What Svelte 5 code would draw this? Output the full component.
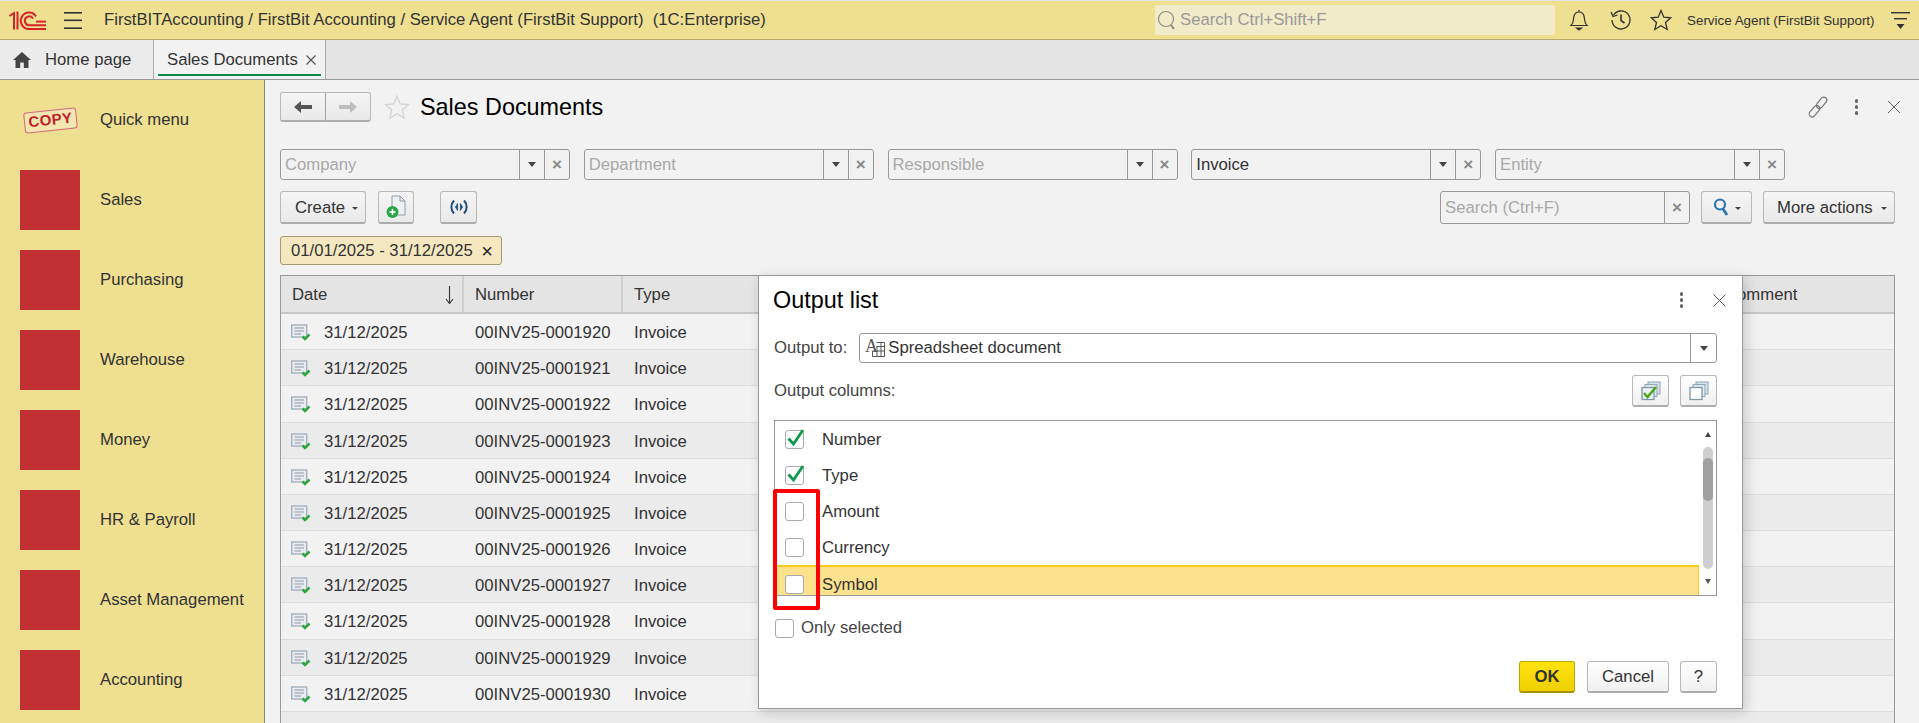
<script>
	const menu = ['Sales', 'Purchasing', 'Warehouse', 'Money', 'HR & Payroll', 'Asset Management', 'Accounting'];
	const filters = [
		{ label: 'Company', value: false },
		{ label: 'Department', value: false },
		{ label: 'Responsible', value: false },
		{ label: 'Invoice', value: true },
		{ label: 'Entity', value: false }
	];
	const rows = Array.from({ length: 11 }, (_, i) => `00INV25-00019${20 + i}`);
	const columns = [
		{ name: 'Number', checked: true },
		{ name: 'Type', checked: true },
		{ name: 'Amount', checked: false },
		{ name: 'Currency', checked: false },
		{ name: 'Symbol', checked: false, current: true }
	];
</script>

<div class="app">
	<header class="topbar">
		<svg class="logo" viewBox="0 0 37 19" width="37" height="19" fill="none" stroke="#d8242a" stroke-width="2">
			<path d="M0.5 5 L5 2 V18.5 M8.5 0.5 V18.5" />
			<path d="M37 18 H20 A8.2 8.2 0 1 1 27 5.5" />
			<path d="M37 14.2 H20.5 A4.4 4.4 0 1 1 24 7.5" />
			<path d="M27 10.6 H37" />
		</svg>
		<svg class="burger" viewBox="0 0 18 17" width="18" height="17" fill="#333">
			<rect y="0" width="18" height="1.6" />
			<rect y="7.5" width="18" height="1.6" />
			<rect y="15.4" width="18" height="1.6" />
		</svg>
		<span class="app-title">FirstBITAccounting / FirstBit Accounting / Service Agent (FirstBit Support)&nbsp; (1C:Enterprise)</span>
		<div class="global-search">
			<svg viewBox="0 0 20 20" width="20" height="20" fill="none" stroke="#8f8f80" stroke-width="1.2">
				<circle cx="9" cy="9" r="7.5" />
				<path d="M14 15 L17 19" stroke-width="2" />
			</svg>
			<span>Search Ctrl+Shift+F</span>
		</div>
		<svg class="bell" viewBox="0 0 20 22" width="20" height="22" fill="none" stroke="#333" stroke-width="1.2">
			<path d="M2 16.5 C5 14 4 11 5 7 C6 3.5 8 3 10 3 C12 3 14 3.5 15 7 C16 11 15 14 18 16.5 Z" />
			<path d="M10 1 V3" />
			<path d="M7.5 19 H12.5 L10 21 Z" fill="#333" />
		</svg>
		<svg class="history" viewBox="0 0 22 22" width="22" height="22" fill="none" stroke="#333" stroke-width="1.3">
			<path d="M3.5 6 A9 9 0 1 1 2 11" />
			<path d="M1 3 L3 7.5 L7.5 6" />
			<path d="M11 5.5 V11.5 L14.5 14" stroke-width="1.6" />
		</svg>
		<svg class="fav" viewBox="0 0 22 22" width="22" height="22" fill="none" stroke="#333" stroke-width="1.3">
			<path d="M11 1.5 L13.8 8.2 L20.8 8.8 L15.5 13.4 L17.2 20.5 L11 16.7 L4.8 20.5 L6.5 13.4 L1.2 8.8 L8.2 8.2 Z" />
		</svg>
		<span class="user">Service Agent (FirstBit Support)</span>
		<svg class="user-menu" viewBox="0 0 19 17" width="19" height="17" fill="#333">
			<rect width="19" height="1.4" />
			<rect x="3" y="6" width="13" height="1.4" />
			<path d="M5.5 12 H13.5 L9.5 17 Z" />
		</svg>
	</header>

	<nav class="tabs">
		<div class="tab home">
			<svg viewBox="0 0 18 16" width="18" height="16" fill="#444">
				<path d="M9 0 L18 8 H15.5 V16 H10.8 V10.5 H7.2 V16 H2.5 V8 H0 Z" />
			</svg>
			<span>Home page</span>
		</div>
		<div class="tab active">
			<span>Sales Documents</span>
			<svg viewBox="0 0 10 10" width="10" height="10" stroke="#555" stroke-width="1.2"><path d="M0.5 0.5 L9.5 9.5 M9.5 0.5 L0.5 9.5" /></svg>
		</div>
	</nav>

	<div class="main">
		<aside class="sidebar">
			<div class="side-item">
				<div class="side-icon">
					<span class="stamp">COPY</span>
				</div>
				<span>Quick menu</span>
			</div>
			{#each menu as item}
				<div class="side-item">
					<div class="side-icon red"></div>
					<span>{item}</span>
				</div>
			{/each}
		</aside>

		<section class="content">
			<div class="page-head">
				<div class="nav-group">
					<button class="btn nav-btn">
						<svg viewBox="0 0 18 12" width="18" height="12" fill="#555"><path d="M0 6 L7 0 V4 H18 V8 H7 V12 Z" /></svg>
					</button>
					<button class="btn nav-btn">
						<svg viewBox="0 0 18 12" width="18" height="12" fill="#bdbdbd"><path d="M18 6 L11 0 V4 H0 V8 H11 V12 Z" /></svg>
					</button>
				</div>
				<svg class="page-star" viewBox="0 0 26 26" width="26" height="26" fill="none" stroke="#d4d4d4" stroke-width="1.3">
					<path d="M13 2 L16.2 10 L24.5 10.5 L18.2 16 L20.2 24.2 L13 19.8 L5.8 24.2 L7.8 16 L1.5 10.5 L9.8 10 Z" />
				</svg>
				<h1>Sales Documents</h1>
				<div class="head-actions">
					<svg viewBox="0 0 22 22" width="22" height="22" fill="none" stroke="#777" stroke-width="1.2">
						<g transform="rotate(40 11 11)">
							<rect x="8" y="-1" width="6" height="13" rx="3" />
							<rect x="8" y="10" width="6" height="13" rx="3" />
						</g>
					</svg>
					<span class="dots"><i></i><i></i><i></i></span>
					<svg viewBox="0 0 14 14" width="14" height="14" stroke="#666" stroke-width="1"><path d="M1 1 L13 13 M13 1 L1 13" /></svg>
				</div>
			</div>

			<div class="filters">
				{#each filters as f}
					<div class="field filter">
						<span class="field-text" class:placeholder={!f.value}>{f.label}</span>
						<span class="field-btn"><b class="caret"></b></span>
						<span class="field-btn"><span class="clear">×</span></span>
					</div>
				{/each}
			</div>

			<div class="toolbar">
				<button class="btn create">Create <b class="caret small"></b></button>
				<button class="btn icon-btn">
					<svg viewBox="0 0 20 24" width="20" height="24">
						<path d="M6 1 H14 L19 6 V20 H6 Z" fill="#eef1f4" stroke="#8b9bab" />
						<path d="M14 1 V6 H19" fill="none" stroke="#8b9bab" />
						<circle cx="6.5" cy="17" r="6" fill="#2ea44a" />
						<path d="M3.5 17 H9.5 M6.5 14 V20" stroke="#fff" stroke-width="1.6" />
					</svg>
				</button>
				<button class="btn icon-btn gap-left">
					<svg viewBox="0 0 20 16" width="20" height="16" fill="none" stroke="#1f4f78" stroke-width="2">
						<path d="M5 1.5 C1.5 5 1.5 11 5 14.5 M15 1.5 C18.5 5 18.5 11 15 14.5" />
						<path d="M8.6 4.5 L6.4 8 L8.6 11.5 Z M11.4 4.5 L13.6 8 L11.4 11.5 Z" fill="#1f4f78" stroke-width="0.8" />
					</svg>
				</button>
				<div class="toolbar-right">
					<div class="field search-field">
						<span class="field-text placeholder">Search (Ctrl+F)</span>
						<span class="field-btn"><span class="clear">×</span></span>
					</div>
					<button class="btn search-btn">
						<svg viewBox="0 0 16 20" width="16" height="20" fill="none" stroke="#2c74b0" stroke-width="2.2">
							<circle cx="7" cy="7.5" r="5" />
							<path d="M10 12 L14 18" stroke-width="2.8" />
						</svg>
						<b class="caret small"></b>
					</button>
					<button class="btn more">More actions <b class="caret small"></b></button>
				</div>
			</div>

			<div class="tag">01/01/2025 - 31/12/2025 <span>×</span></div>

			<div class="table">
				<div class="row thead">
					<div class="cell date-head">Date
						<svg viewBox="0 0 9 18" width="9" height="18" fill="none" stroke="#333" stroke-width="1.1"><path d="M4.5 0 V17 M1 13 L4.5 17.5 L8 13" /></svg>
					</div>
					<div class="cell">Number</div>
					<div class="cell">Type</div>
					<div class="cell comment">Comment</div>
				</div>
				{#each rows as number}
					<div class="row">
						<div class="cell date">
							<svg viewBox="0 0 20 18" width="20" height="18">
								<rect x="0.7" y="1" width="15" height="12" fill="#e8ecf0" stroke="#a6b1bf" stroke-width="1.4" />
								<path d="M3.5 4 H13 M3.5 7 H13 M3.5 10 H10" stroke="#8f99a5" />
								<path d="M11.5 12.5 L14 15 L18.5 10.5" fill="none" stroke="#2fa83f" stroke-width="2.6" />
							</svg>
							<span>31/12/2025</span>
						</div>
						<div class="cell">{number}</div>
						<div class="cell">Invoice</div>
						<div class="cell comment"></div>
					</div>
				{/each}
				<div class="row"></div>
			</div>
		</section>
	</div>

	<div class="dialog">
		<div class="dialog-head">
			<h2>Output list</h2>
			<span class="dots"><i></i><i></i><i></i></span>
			<svg viewBox="0 0 13 13" width="13" height="13" stroke="#555" stroke-width="1"><path d="M0.5 0.5 L12.5 12.5 M12.5 0.5 L0.5 12.5" /></svg>
		</div>

		<div class="output-row">
			<span class="dlg-label">Output to:</span>
			<div class="field white">
				<svg viewBox="0 0 20 18" width="20" height="18">
					<text x="0" y="13" font-family="'Liberation Serif', serif" font-size="18" fill="#555">A</text>
					<path d="M11.5 3.5 H19.5 M11.5 7.5 H19.5 M7.5 12 H19.5 M7.5 17.5 H19.5 M7.5 12 V17.5 M12 7.5 V17.5 M16 3.5 V17.5 M19.5 3.5 V17.5" stroke="#555" fill="none" />
				</svg>
				<span class="field-text">Spreadsheet document</span>
				<span class="field-btn wide"><b class="caret"></b></span>
			</div>
		</div>

		<div class="columns-row">
			<span class="dlg-label">Output columns:</span>
			<button class="btn white-btn square">
				<svg viewBox="0 0 20 20" width="20" height="20" fill="none">
					<rect x="7" y="1" width="12" height="12" fill="#d5e3ea" stroke="#8fa6b5" />
					<rect x="4" y="3.5" width="12" height="12" fill="#dfeaee" stroke="#8fa6b5" />
					<rect x="1" y="6.5" width="12" height="12" fill="#eef4f6" stroke="#7c98aa" stroke-width="1.3" />
					<path d="M3 12 L6.5 16 L15 6" stroke="#4aa81e" stroke-width="2.6" />
				</svg>
			</button>
			<button class="btn white-btn square">
				<svg viewBox="0 0 20 20" width="20" height="20" fill="none">
					<rect x="7" y="1" width="12" height="12" fill="#d5e3ea" stroke="#8fa6b5" />
					<rect x="4" y="3.5" width="12" height="12" fill="#dfeaee" stroke="#8fa6b5" />
					<rect x="1" y="6.5" width="12" height="12" fill="#fff" stroke="#7c98aa" stroke-width="1.3" />
				</svg>
			</button>
		</div>

		<div class="list">
			<div class="list-rows">
				{#each columns as col}
					<div class="list-row" class:current={col.current}>
						<span class="check">
							{#if col.checked}
								<svg viewBox="0 0 19 19" width="19" height="19" fill="none" stroke="#0b9a4e" stroke-width="2.8"><path d="M3.5 8.5 L8.5 14 L18 0" /></svg>
							{/if}
						</span>
						<span class="col-name">{col.name}</span>
					</div>
				{/each}
			</div>
			<div class="scroll">
				<b class="arrow up"></b>
				<div class="track"><div class="thumb"></div></div>
				<b class="arrow down"></b>
			</div>
		</div>

		<div class="only">
			<span class="check"></span>
			<span>Only selected</span>
		</div>

		<div class="dialog-foot">
			<button class="btn ok">OK</button>
			<button class="btn white-btn cancel">Cancel</button>
			<button class="btn white-btn help">?</button>
		</div>

		<div class="callout"></div>
	</div>
</div>

<style>
	:global(body) {
		margin: 0;
		background: #f2f2f2;
	}

	.app {
		position: relative;
		width: 1919px;
		height: 723px;
		overflow: hidden;
		display: flex;
		flex-direction: column;
		font-family: 'Liberation Sans', Arial, sans-serif;
		font-size: 16.7px;
		color: #333;
		background: #f2f2f2;
	}

	.topbar {
		flex: none;
		box-sizing: border-box;
		height: 40px;
		border-top: 1px solid #e4e4e4;
		border-bottom: 1px solid #b5a96b;
		background: #eedf91;
		display: flex;
		align-items: center;
		padding-left: 9px;
	}

	.burger {
		margin-left: 18px;
	}

	.app-title {
		margin-left: 22px;
		width: 1051px;
		white-space: nowrap;
	}

	.global-search {
		width: 400px;
		height: 30px;
		background: #f1ebc9;
		border-radius: 2px;
		display: flex;
		align-items: center;
		gap: 3px;
		padding-left: 2px;
		box-sizing: border-box;
		color: #999;
	}

	.bell {
		margin-left: 14px;
	}

	.history {
		margin-left: 21px;
	}

	.fav {
		margin-left: 18px;
	}

	.user {
		margin-left: 15px;
		font-size: 13.4px;
		white-space: nowrap;
	}

	.user-menu {
		margin-left: 16px;
	}

	.tabs {
		flex: none;
		box-sizing: border-box;
		height: 40px;
		display: flex;
		background: #e4e4e4;
		border-bottom: 1px solid #999;
	}

	.tab {
		display: flex;
		align-items: center;
		box-sizing: border-box;
		border-right: 1px solid #aaa;
	}

	.home {
		width: 154px;
		padding-left: 13px;
		gap: 14px;
		background: #ececec;
	}

	.active {
		width: 172px;
		padding-left: 13px;
		gap: 8px;
		background: #f2f2f2;
		position: relative;
	}

	.active::after {
		content: '';
		position: absolute;
		left: 4px;
		right: 4px;
		bottom: 3px;
		height: 2px;
		background: #078a4c;
	}

	.main {
		flex: 1;
		display: flex;
		min-height: 0;
	}

	.sidebar {
		flex: none;
		box-sizing: border-box;
		width: 265px;
		background: #eedf91;
		border-right: 1px solid #8f8a5e;
		overflow: hidden;
	}

	.side-item {
		height: 80px;
		display: flex;
		align-items: center;
		gap: 20px;
		padding-left: 20px;
		white-space: nowrap;
	}

	.side-item > span {
		margin-bottom: 1px;
	}

	.side-icon {
		flex: none;
		width: 60px;
		height: 60px;
		display: flex;
		align-items: center;
		justify-content: center;
	}

	.red {
		background: #c13033;
	}

	.stamp {
		box-sizing: border-box;
		flex: none;
		width: 53px;
		height: 21px;
		line-height: 18px;
		border: 1.5px solid #d0697a;
		border-radius: 3px;
		background: #f3e6b0;
		color: #bf1f2c;
		font-size: 15px;
		font-weight: 700;
		letter-spacing: 0.4px;
		text-align: center;
		transform: rotate(-6deg);
	}

	.content {
		flex: 1;
		min-width: 0;
		padding: 12px 24px 0 15px;
		box-sizing: border-box;
		display: flex;
		flex-direction: column;
	}

	.page-head {
		display: flex;
		align-items: center;
		height: 30px;
		flex: none;
	}

	.nav-group {
		display: flex;
	}

	.btn {
		box-sizing: border-box;
		height: 100%;
		margin: 0;
		padding: 0;
		font: inherit;
		color: #333;
		border: 1px solid #b8b8b8;
		border-bottom: 2px solid #adadad;
		border-radius: 3px;
		background: linear-gradient(#f5f5f5, #e9e9e9);
		display: flex;
		align-items: center;
		justify-content: center;
		white-space: nowrap;
	}

	.nav-btn {
		width: 46px;
		height: 30px;
	}

	.nav-btn:first-child {
		border-radius: 3px 0 0 3px;
		border-right-color: #a0a0a0;
	}

	.nav-btn:last-child {
		width: 45px;
		border-left: 0;
		border-radius: 0 3px 3px 0;
	}

	.page-star {
		margin-left: 13px;
	}

	h1 {
		margin: 0 0 0 10px;
		font-size: 23.4px;
		font-weight: 400;
		color: #000;
	}

	.head-actions {
		margin-left: auto;
		display: flex;
		align-items: center;
		margin-right: -6px;
	}

	.head-actions .dots {
		margin-left: 26px;
		margin-right: 29px;
	}

	.dots {
		display: inline-flex;
		flex-direction: column;
		gap: 2.5px;
	}

	.dots i {
		display: block;
		width: 3.5px;
		height: 3.5px;
		border-radius: 50%;
		background: #666;
	}

	.filters {
		flex: none;
		display: flex;
		gap: 13.75px;
		margin-top: 27px;
		height: 31px;
	}

	.field {
		box-sizing: border-box;
		display: flex;
		align-items: stretch;
		border: 1px solid #999;
		border-radius: 3px;
	}

	.filter {
		width: 290px;
		height: 31px;
	}

	.field-text {
		flex: 1;
		padding-left: 4px;
		display: flex;
		align-items: center;
		min-width: 0;
	}

	.placeholder {
		color: #a8a8a8;
	}

	.field-btn {
		flex: none;
		box-sizing: border-box;
		width: 25px;
		border-left: 1px solid #999;
		display: flex;
		align-items: center;
		justify-content: center;
	}

	.caret {
		display: inline-block;
		width: 0;
		height: 0;
		border-left: 4px solid transparent;
		border-right: 4px solid transparent;
		border-top: 5px solid #444;
	}

	.caret.small {
		border-left-width: 3px;
		border-right-width: 3px;
		border-top-width: 3px;
		margin-left: 4px;
		margin-top: 2px;
	}

	.clear {
		font-size: 17px;
		font-weight: 700;
		color: #888;
		line-height: 1;
	}

	.toolbar {
		flex: none;
		display: flex;
		height: 33px;
		margin-top: 11px;
	}

	.create {
		width: 86px;
		gap: 3px;
		justify-content: flex-start;
		padding-left: 14px;
		padding-top: 1px;
	}

	.icon-btn {
		width: 36px;
		margin-left: 12px;
	}

	.gap-left {
		width: 37px;
		margin-left: 26px;
	}

	.toolbar-right {
		margin-left: auto;
		display: flex;
		gap: 11px;
	}

	.search-field {
		width: 250px;
	}

	.search-btn {
		width: 51px;
		gap: 2px;
	}

	.more {
		width: 132px;
		gap: 4px;
		justify-content: flex-start;
		padding-left: 13px;
		padding-top: 1px;
	}

	.tag {
		flex: none;
		align-self: flex-start;
		box-sizing: border-box;
		margin-top: 12px;
		height: 29px;
		width: 222px;
		display: flex;
		align-items: center;
		justify-content: space-between;
		padding: 0 8px 0 10px;
		background: #f5e8c0;
		border: 1px solid #a8996b;
		border-radius: 3px;
	}

	.tag span {
		font-size: 20px;
		line-height: 1;
		color: #222;
	}

	.table {
		flex: none;
		margin-top: 10px;
		border: 1px solid #999;
		border-bottom: 0;
		box-sizing: border-box;
		height: 450px;
		overflow: hidden;
	}

	.row {
		display: grid;
		grid-template-columns: 183px 159px 1fr 180px;
		height: 36.18px;
		box-sizing: border-box;
		border-bottom: 1px solid #dcdcdc;
		background: #f2f2f2;
	}

	.row:nth-child(odd) {
		background: #ebebeb;
	}

	.row.thead {
		height: 38px;
		background: #e4e4e4;
		border-bottom: 2px solid #c6c6c6;
	}

	.cell {
		display: flex;
		align-items: center;
		padding-left: 11px;
		padding-top: 3px;
		box-sizing: border-box;
		white-space: nowrap;
		min-width: 0;
	}

	.thead .cell {
		border-right: 2px solid #cfcfcf;
		padding-top: 2px;
	}

	.thead .cell:nth-child(3),
	.thead .cell:last-child {
		border-right: 0;
	}

	.date-head {
		justify-content: space-between;
		padding-right: 8px;
	}

	.date {
		padding-left: 10px;
		gap: 13px;
	}

	.dialog {
		position: absolute;
		left: 758px;
		top: 275px;
		width: 985px;
		height: 434px;
		box-sizing: border-box;
		background: #fff;
		border: 1px solid #999;
		box-shadow: 3px 3px 12px rgba(0, 0, 0, 0.18);
		padding: 0 25px 0 15px;
		display: flex;
		flex-direction: column;
	}

	.dialog-head {
		height: 48px;
		flex: none;
		display: flex;
		align-items: center;
	}

	h2 {
		margin: 0 auto 0 -1px;
		font-size: 23.4px;
		font-weight: 400;
		color: #000;
	}

	.dialog-head .dots {
		margin-right: 30px;
	}

	.dialog-head svg {
		margin-right: -9px;
	}

	.output-row {
		flex: none;
		margin-top: 9px;
		display: flex;
		align-items: center;
		height: 30px;
	}

	.dlg-label {
		color: #444;
	}

	.field.white {
		flex: 1;
		height: 30px;
		margin-left: 12px;
		align-items: center;
		padding-left: 5px;
	}

	.field.white .field-btn {
		align-self: stretch;
	}

	.field.white .field-text {
		align-self: stretch;
		padding-left: 3px;
	}

	.wide {
		width: 26px;
	}

	.columns-row {
		flex: none;
		margin-top: 12px;
		height: 32px;
		display: flex;
		align-items: center;
		gap: 11px;
	}

	.columns-row .dlg-label {
		margin-right: auto;
	}

	.white-btn {
		background: linear-gradient(#fff, #f0f0f0);
	}

	.square {
		width: 37px;
		height: 32px;
	}

	.list {
		flex: none;
		margin-top: 13px;
		box-sizing: border-box;
		height: 176px;
		border: 1px solid #999;
		display: flex;
		overflow: hidden;
	}

	.list-rows {
		flex: 1;
		min-width: 0;
	}

	.list-row {
		height: 36px;
		box-sizing: border-box;
		display: flex;
		align-items: center;
		gap: 18px;
		padding-left: 10px;
	}

	.col-name {
		margin-top: 1px;
	}

	.list-row.current {
		height: 30px;
		align-items: flex-start;
		padding-top: 7px;
		background: #fde28d;
		border: solid #fdcb1e;
		border-width: 2px 1px 0 0;
	}

	.list-row.current .check {
		margin-top: 1px;
	}

	.check {
		flex: none;
		box-sizing: border-box;
		width: 19px;
		height: 19px;
		background: #fff;
		border: 1px solid #aaa;
		border-radius: 3px;
		display: inline-flex;
		overflow: visible;
	}

	.check svg {
		flex: none;
		margin: -1px;
		overflow: visible;
	}

	.scroll {
		flex: none;
		width: 17px;
		display: flex;
		flex-direction: column;
		align-items: center;
		padding-top: 11px;
		box-sizing: border-box;
	}

	.arrow {
		display: block;
		width: 0;
		height: 0;
		border-left: 3px solid transparent;
		border-right: 3px solid transparent;
	}

	.arrow.up {
		border-bottom: 5px solid #444;
	}

	.arrow.down {
		border-top: 5px solid #555;
		margin-top: 10px;
	}

	.track {
		width: 10px;
		height: 122px;
		margin-top: 10px;
		padding-top: 11px;
		box-sizing: border-box;
		background: #cfcfcf;
		border-radius: 5px;
	}

	.thumb {
		height: 43px;
		background: #a0a0a0;
		border-radius: 5px;
	}

	.only {
		flex: none;
		margin-top: 22px;
		display: flex;
		align-items: center;
		gap: 7px;
		color: #444;
		margin-left: 1px;
	}

	.dialog-foot {
		flex: none;
		margin-top: 23px;
		height: 32px;
		display: flex;
		justify-content: flex-end;
		gap: 11px;
	}

	.ok {
		width: 56px;
		font-weight: 700;
		background: linear-gradient(#ffe40f, #efcf00);
		border-color: #bfa800;
		border-bottom-color: #a89300;
		margin-right: 1px;
	}

	.cancel {
		width: 82px;
	}

	.help {
		width: 37px;
	}

	.callout {
		position: absolute;
		left: 14px;
		top: 213px;
		width: 47px;
		height: 121px;
		box-sizing: border-box;
		border: 4px solid #f00;
		border-radius: 2px;
		pointer-events: none;
	}
</style>
